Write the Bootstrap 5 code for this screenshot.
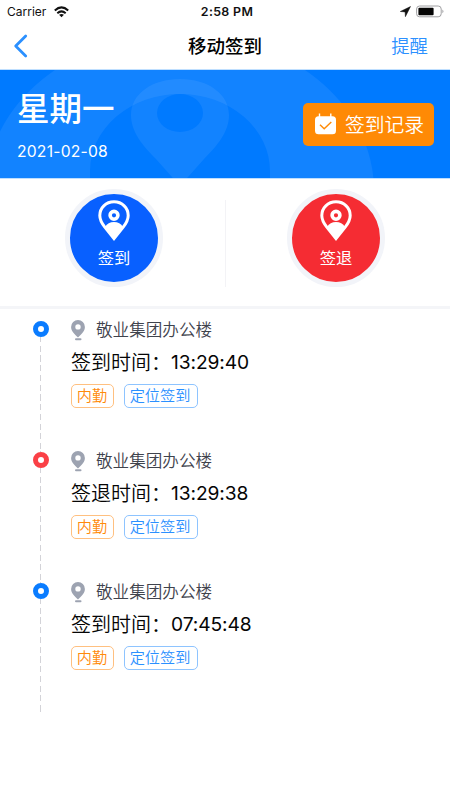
<!DOCTYPE html>
<html lang="zh-CN">

<head>
  <meta charset="UTF-8">
  <meta name="viewport" content="width=device-width, initial-scale=1">
  <title>移动签到</title>
  <link href="https://cdn.jsdelivr.net/npm/bootstrap@5.3.3/dist/css/bootstrap.min.css" rel="stylesheet">
  <style>
    body {
      font-family: Inter, "Noto Sans CJK SC", sans-serif;
      color: #111;
      height: 800px;
      overflow: hidden;
    }
    svg { display: block; flex: none; }
    .status-bar { height: 23px; padding: 0 5px 0 7px; font-size: 12px; line-height: 23px; }
    .status-bar > div { flex: 1 1 0; }
    .status-time { font-size: 12.4px; font-weight: 600; letter-spacing: .35px; padding-left: 2px; }
    .title-bar { height: 46px; padding: 0 22px 0 13px; }
    .title-bar > div { flex: 1 1 0; }
    .page-title { font-size: 18.5px; font-weight: 500; line-height: 46px; color: #000; padding-left: 9px; }
    .remind { font-size: 18.4px; font-weight: 350; line-height: 46px; color: #2b90ff; }
    .banner { height: 110px; background: #007aff; border-top: 1px solid #bfdfff; border-bottom: 1px solid #bfdfff; padding: 0 16px 0 17px; }
    .banner-art { top: 0; left: 0; }
    .weekday { font-size: 32.5px; font-weight: 500; line-height: 40px; margin-top: 20px; }
    .day { font-size: 15.7px; line-height: 20px; margin-top: 12px; letter-spacing: .2px; }
    .btn-record { width: 131px; height: 43px; background: #ff8a05; border-radius: 5px; font-size: 19.8px; font-weight: 350; line-height: 43px; padding: 0 0 0 11px; gap: 8px; }
    .btn-record span { padding-top: 2px; }
    .punch { height: 130px; border-bottom: 3px solid #f4f5f8; padding-top: 10px; }
    .punch-sep { width: 1px; height: 87px; background: #f3f3f6; margin-top: 11px; }
    .punch-btn { width: 98px; height: 98px; border: 5px solid #f2f4f9; font-size: 16.3px; line-height: 22px; padding-top: 6px; }
    .punch-btn span { margin-top: 6px; }
    .punch-in { background: #0860ff; margin-left: 65px; }
    .punch-out { background: #f52c33; margin-right: 65px; }
    .timeline { margin: 0; padding: 12px 0 0 33px; }
    .entry { height: 131px; gap: 22px; }
    .entry:last-child { height: 129px; }
    .rail { width: 16px; }
    .rail-line { width: 1px; flex: 1; background: repeating-linear-gradient(#d3d3d8 0 6px, transparent 6px 9.75px) 0 -1px; margin-right: 1px; }
    .node { width: 16px; height: 16px; border: 5px solid #0a7cff; background: #fff; flex: none; }
    .node-out { border-color: #fa4046; }
    .place { height: 18px; font-size: 16.6px; font-weight: 350; line-height: 18px; color: #3f434d; gap: 11px; }
    .stamp { height: 24px; font-size: 20px; font-weight: 350; line-height: 24px; margin-top: 12px; color: #050505; white-space: nowrap; }
    .clock { font-size: 19.2px; font-weight: 400; letter-spacing: -.1px; line-height: 22px; }
    .tags { gap: 10px; margin-top: 9px; }
    .tag { height: 24px; font-size: 15.2px; font-weight: 350; line-height: 22px; border: 1px solid; border-radius: 5px; text-align: center; }
    .tag-office { width: 43px; color: #ff8a0c; border-color: #ffc080; padding-right: 1px; }
    .tag-gps { width: 74px; color: #2b90ff; border-color: #8ec4ff; padding-right: 2px; }
  </style>
</head>

<body class="bg-white">

  <!-- Status bar -->
  <div class="status-bar d-flex align-items-center">
    <div class="d-flex align-items-center">
      <span>Carrier</span>
      <svg class="ms-2" width="15" height="12" viewBox="0 0 15 12">
        <g fill="none" stroke="#111" stroke-width="2">
          <path d="M.8 4.5Q7.5-1.8 14.2 4.5" />
          <path d="M3.3 7.2q4.2-3.6 8.4 0" />
        </g>
        <path d="M5.1 8.8q2.4-1.8 4.8 0L7.5 11.3z" fill="#111" />
      </svg>
    </div>
    <span class="status-time">2:58 PM</span>
    <div class="d-flex align-items-center justify-content-end">
      <svg width="11" height="11" viewBox="0 0 11 11"><path d="M10.5.5L.3 5.5l4.8.4.3 4.8z" fill="#111" stroke="#111" stroke-width=".5" /></svg>
      <svg class="ms-1" width="30" height="13" viewBox="0 0 30 13">
        <rect x="1.6" y="1" width="24.6" height="10.8" rx="3" fill="none" stroke="#a0a0a3" />
        <rect x="3.4" y="2.8" width="15.2" height="7.4" rx="1" fill="#050505" />
        <path d="M27.4 4.5q2.2 1.9 0 3.8z" fill="#a0a0a3" />
      </svg>
    </div>
  </div>

  <!-- Title bar -->
  <div class="title-bar d-flex align-items-center">
    <div>
      <svg width="15" height="24" viewBox="0 0 15 24"><path d="M12.7 2L2.7 12l10 10" fill="none" stroke="#2b90ff" stroke-width="2.8" stroke-linecap="round" stroke-linejoin="round" /></svg>
    </div>
    <span class="page-title">移动签到</span>
    <div class="remind text-end">提醒</div>
  </div>

  <!-- Date banner -->
  <div class="banner position-relative text-white d-flex justify-content-between align-items-center">
    <svg class="banner-art position-absolute" width="450" height="108" viewBox="0 70 450 108">
      <g fill="#fff" fill-opacity=".07" fill-rule="evenodd">
        <path d="M-14 190a194 157 0 0 1 388 0zM90 190v-19a90 77 0 0 1 180 0v19z" />
        <path d="M180 79c-28 0-49 15-49 36 0 17 12 31 25 44l24 27 24-27c13-13 25-27 25-44 0-21-21-36-49-36zM180 94a23 19 0 1 0 0 38 23 19 0 1 0 0-38z" />
      </g>
    </svg>
    <div class="position-relative align-self-start">
      <div class="weekday">星期一</div>
      <div class="day">2021-02-08</div>
    </div>
    <button class="btn-record btn border-0 text-white position-relative d-flex align-items-center">
      <svg width="23" height="22" viewBox="0 0 23 22">
        <path d="M5.5.5v5M16.8.5v5" stroke="#fff" stroke-width="1.4" />
        <rect x="1" y="3.3" width="21" height="18" rx="3.5" fill="#fff" />
        <path d="M6 11.8l4.2 4L17.3 9" fill="none" stroke="#ff8a05" stroke-width="1.4" />
      </svg>
      <span>签到记录</span>
    </button>
  </div>

  <!-- Check in / check out -->
  <div class="punch d-flex justify-content-between">
    <div class="punch-in punch-btn rounded-circle text-white d-flex flex-column align-items-center">
      <svg width="32" height="41" viewBox="0 0 32 41">
        <path d="M16 1.8C7.8 1.8 1.8 8 1.8 15.5c0 5 2.4 8.3 5 11.6L16 38.5l9.2-11.4c2.6-3.3 5-6.6 5-11.6C30.2 8 24.2 1.8 16 1.8z" fill="none" stroke="#fff" stroke-width="3" />
        <circle cx="16" cy="15.3" r="3.9" fill="none" stroke="#fff" stroke-width="3.6" />
        <path d="M7 27c2-3.500 5-5 9-5s7 1.500 9 5l-9 13z" fill="#fff" />
      </svg>
      <span>签到</span>
    </div>
    <div class="punch-sep"></div>
    <div class="punch-out punch-btn rounded-circle text-white d-flex flex-column align-items-center">
      <svg width="32" height="41" viewBox="0 0 32 41">
        <path d="M16 1.8C7.8 1.8 1.8 8 1.8 15.5c0 5 2.4 8.3 5 11.6L16 38.5l9.2-11.4c2.6-3.3 5-6.6 5-11.6C30.2 8 24.2 1.8 16 1.8z" fill="none" stroke="#fff" stroke-width="3" />
        <circle cx="16" cy="15.3" r="3.9" fill="none" stroke="#fff" stroke-width="3.6" />
        <path d="M7 27c2-3.500 5-5 9-5s7 1.500 9 5l-9 13z" fill="#fff" />
      </svg>
      <span>签退</span>
    </div>
  </div>

  <!-- Records -->
  <ul class="timeline list-unstyled" id="timeline"></ul>

  <script src="https://cdn.jsdelivr.net/npm/bootstrap@5.3.3/dist/js/bootstrap.bundle.min.js"></script>
  <script>
    const records = [
      { type: '签到', time: '13:29:40' },
      { type: '签退', time: '13:29:38' },
      { type: '签到', time: '07:45:48' }
    ];

    const timeline = document.getElementById('timeline');
    records.forEach(rec => {
      timeline.innerHTML += `
        <li class="entry d-flex">
          <div class="rail d-flex flex-column align-items-center">
            <div class="node rounded-circle ${rec.type === '签退' ? 'node-out' : ''}"></div>
            <div class="rail-line"></div>
          </div>
          <div>
            <div class="place d-flex align-items-center">
              <svg width="14" height="21" viewBox="0 0 14 21">
                <path fill="#9da3b1" fill-rule="evenodd" d="M7 0A6.9 6.9 0 0 0 .1 6.900C.1 11 3.500 14 7 17.500 10.500 14 13.900 11 13.900 6.900A6.900 6.900 0 0 0 7 0zM7 4.200a2.700 2.700 0 1 1 0 5.400 2.700 2.700 0 0 1 0-5.400z"/>
                <path d="M5 19.200h4.500" stroke="#9da3b1" stroke-width="2" stroke-linecap="round"/>
              </svg>
              <span>敬业集团办公楼</span>
            </div>
            <div class="stamp d-flex">${rec.type}时间：<span class="clock">${rec.time}</span></div>
            <div class="tags d-flex">
              <span class="tag tag-office">内勤</span>
              <span class="tag tag-gps">定位签到</span>
            </div>
          </div>
        </li>
      `;
    });
  </script>
</body>

</html>
